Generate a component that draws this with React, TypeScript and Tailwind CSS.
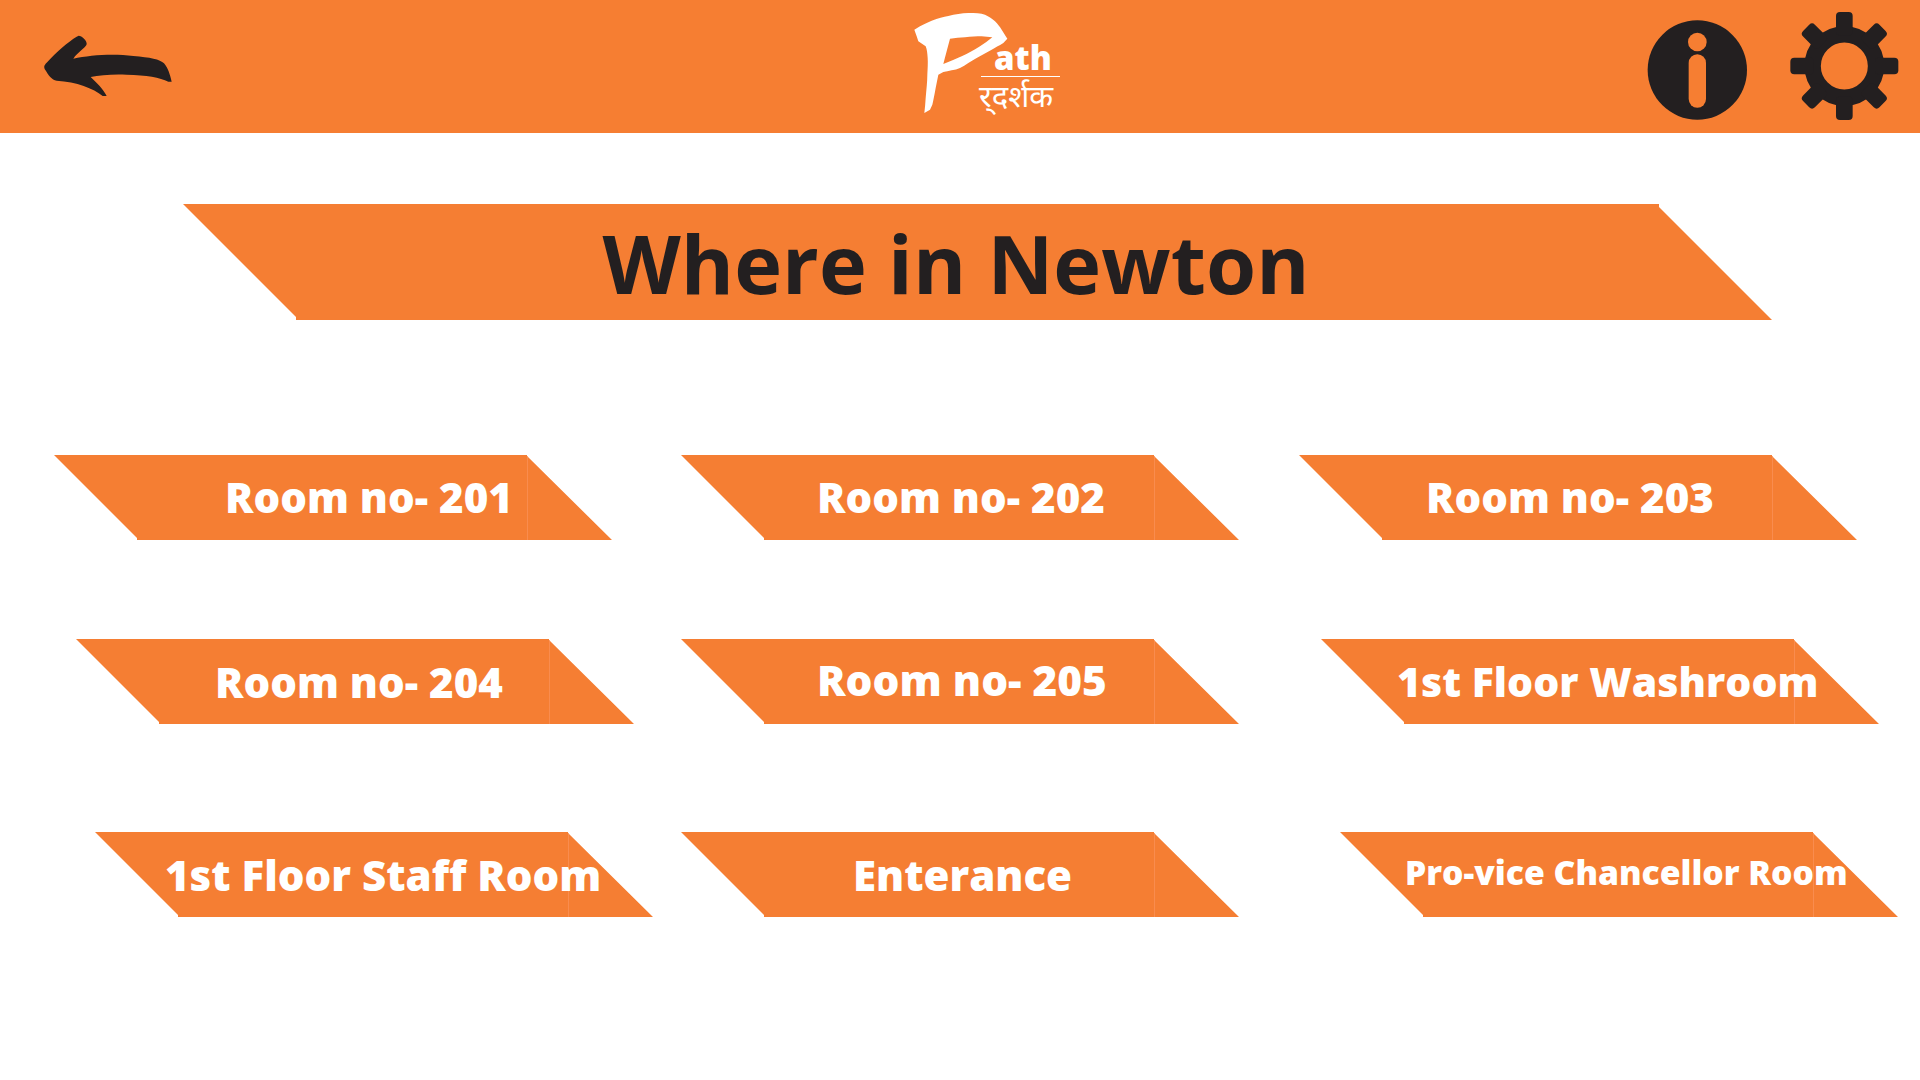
import React from "react";

const rows = [
  [
    { label: "Room no- 201", box: "ml-[54px]", text: "pl-[171px] pb-[2px] text-[42px]" },
    { label: "Room no- 202", box: "ml-[69px]", text: "pl-[136px] pb-[2px] text-[42px]" },
    { label: "Room no- 203", box: "ml-[60px]", text: "pl-[127px] pb-[2px] text-[42px]" },
  ],
  [
    { label: "Room no- 204", box: "ml-[76px]", text: "pl-[139px] text-[42px]" },
    { label: "Room no- 205", box: "ml-[47px]", text: "pl-[136px] pb-[4px] text-[42.3px]" },
    { label: "1st Floor Washroom", box: "ml-[82px]", text: "pl-[76px] text-[41px]" },
  ],
  [
    { label: "1st Floor Staff Room", box: "ml-[95px]", text: "pl-[70px] text-[42px]" },
    { label: "Enterance", box: "ml-[28px]", text: "pl-[172px] text-[42px]" },
    { label: "Pro-vice Chancellor Room", box: "ml-[101px]", text: "pl-[65px] pb-[5px] text-[33.7px]" },
  ],
];

const Banner = ({ label, box, text }: any) => {
  return (
    <div className={`relative h-[85px] w-[558px] shrink-0 bg-[#f57e33] [clip-path:polygon(0_0,473px_0,473px_1px,558px_85px,83px_85px,83px_83px)] ${box}`}>
      <div className="absolute top-0 left-[473px] h-full w-px bg-[#f98c4e]" />
      <div className={`relative flex h-full items-center whitespace-nowrap font-['Open_Sans',sans-serif] font-extrabold text-white ${text}`}>
        {label}
      </div>
    </div>
  );
};

const BackArrow = () => (
  <svg className="h-[133px] w-[300px] shrink-0" viewBox="0 0 900 399">
    <path
      fill="#231f20"
      d="M236 107C245 107 262 122 260 133C258 142 232 158 220 176C270 165 340 160 400 168C450 172 480 178 492 190C505 205 510 225 515 245L505 245C480 232 440 225 380 224C340 222 300 225 272 231C290 248 310 268 320 288L308 288C280 265 230 245 170 242C155 240 145 225 136 210C130 200 133 195 140 188C170 155 205 125 230 110Z"
    />
  </svg>
);

const Logo = () => (
  <div className="relative ml-[580px] h-[133px] w-[220px] shrink-0">
    <svg className="absolute top-[8px] left-[25px] h-[115px] w-[110px]" viewBox="0 0 330 345">
      <path
        fill="#fff"
        fillRule="evenodd"
        d="M28 65L45 55C60 47 72 41 80 38C100 30 115 27 130 24C150 19 170 16 190 15C210 15 228 16 240 20C252 26 262 32 270 40C278 48 285 57 290 65L307 92L295 105C282 113 270 119 260 125L215 150C198 160 182 171 165 180C150 187 130 188 115 192L100 200L92 240C88 262 85 278 82 290L75 305L58 315C60 300 61 285 62 270C64 245 67 222 67 200C68 182 69 165 68 150C67 135 66 125 62 115L40 100L35 85ZM135 92C150 90 165 89 180 88C198 86 215 85 230 85L262 88C250 98 238 107 225 115C207 126 190 136 170 145C152 153 133 161 115 168C118 155 122 142 125 130Z"
      />
    </svg>
    <span className="absolute top-[38px] left-[114px] font-['Open_Sans',sans-serif] text-[33px] leading-[40px] font-extrabold text-white">
      ath
    </span>
    <div className="absolute top-[76px] left-[101px] h-[1px] w-[79px] bg-white" />
    <span className="absolute top-[78px] left-[99px] font-['Noto_Sans_Devanagari','Noto_Sans',sans-serif] text-[31px] leading-[44px] text-white">
      र्‌दर्शक
    </span>
  </div>
);

const InfoAndGear = () => (
  <svg className="ml-[530px] h-[133px] w-[290px] shrink-0" viewBox="0 0 870 399">
    <circle cx="202" cy="210" r="149" fill="#231f20" />
    <circle cx="202" cy="126" r="28" fill="#f67e32" />
    <rect x="176" y="163" width="52" height="160" rx="26" fill="#f67e32" />
    <circle cx="643" cy="198" r="95" fill="none" stroke="#231f20" strokeWidth="49" />
    {[0, 45, 90, 135, 180, 225, 270, 315].map((deg) => (
      <rect
        key={deg}
        x="618"
        y="36"
        width="50"
        height="70"
        rx="12"
        fill="#231f20"
        transform={`rotate(${deg} 643 198)`}
      />
    ))}
  </svg>
);

export default function App() {
  return (
    <div className="min-h-screen w-full bg-white">
      <header className="flex h-[133px] items-start bg-[#f67e32]">
        <BackArrow />
        <Logo />
        <InfoAndGear />
      </header>

      <main className="pt-[71px]">
        <div className="relative ml-[183px] flex h-[116px] w-[1589px] items-center justify-center bg-[#f57e33] pr-[43px] [clip-path:polygon(0_0,1476px_0,1476px_3px,1589px_116px,113px_116px,113px_113px)]">
          <h1 className="font-['Open_Sans',sans-serif] text-[81px] leading-none font-bold tracking-[0.1px] whitespace-nowrap text-[#231f20]">
            Where in Newton
          </h1>
        </div>

        <div className="mt-[135px] flex flex-col">
          <div className="flex">
            {rows[0].map((b) => (
              <Banner key={b.label} {...b} />
            ))}
          </div>
          <div className="mt-[99px] flex">
            {rows[1].map((b) => (
              <Banner key={b.label} {...b} />
            ))}
          </div>
          <div className="mt-[108px] flex">
            {rows[2].map((b) => (
              <Banner key={b.label} {...b} />
            ))}
          </div>
        </div>
      </main>
    </div>
  );
}
